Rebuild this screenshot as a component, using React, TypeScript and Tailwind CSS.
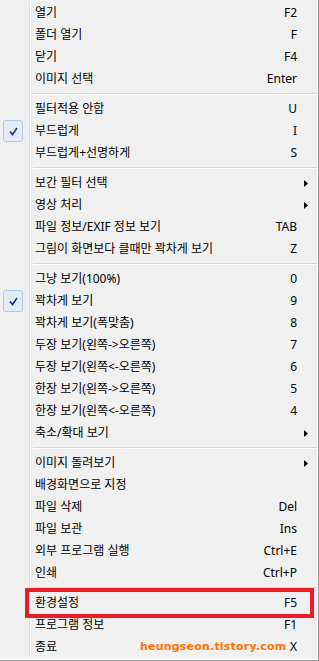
type Item = { label: string; key?: string; sub?: boolean; checked?: boolean } | 'sep'

const items: Item[] = [
  {label: '열기', key: 'F2'},
  {label: '폴더 열기', key: 'F'},
  {label: '닫기', key: 'F4'},
  {label: '이미지 선택', key: 'Enter'},
  'sep',
  {label: '필터적용 안함', key: 'U'},
  {label: '부드럽게', key: 'I', checked: true},
  {label: '부드럽게+선명하게', key: 'S'},
  'sep',
  {label: '보간 필터 선택', sub: true},
  {label: '영상 처리', sub: true},
  {label: '파일 정보/EXIF 정보 보기', key: 'TAB'},
  {label: '그림이 화면보다 클때만 꽉차게 보기', key: 'Z'},
  'sep',
  {label: '그냥 보기(100%)', key: '0'},
  {label: '꽉차게 보기', key: '9', checked: true},
  {label: '꽉차게 보기(폭맞춤)', key: '8'},
  {label: '두장 보기(왼쪽->오른쪽)', key: '7'},
  {label: '두장 보기(왼쪽<-오른쪽)', key: '6'},
  {label: '한장 보기(왼쪽->오른쪽)', key: '5'},
  {label: '한장 보기(왼쪽<-오른쪽)', key: '4'},
  {label: '축소/확대 보기', sub: true},
  'sep',
  {label: '이미지 돌려보기', sub: true},
  {label: '배경화면으로 지정'},
  {label: '파일 삭제', key: 'Del'},
  {label: '파일 보관', key: 'Ins'},
  {label: '외부 프로그램 실행', key: 'Ctrl+E'},
  {label: '인쇄', key: 'Ctrl+P'},
  'sep',
  {label: '환경설정', key: 'F5'},
  {label: '프로그램 정보', key: 'F1'},
  {label: '종료', key: 'X'},
]

function Gutter({checked}: { checked?: boolean }) {
  return <div className="flex h-full shrink-0">
    <div className="w-[29px] flex items-center pl-[3px]">
      {checked && (
        <div className="w-[20px] h-[22px] rounded-[3px] border border-[#aecbee] bg-[#e3ecf8] flex items-center justify-center">
          <svg width="9" height="9" viewBox="0 0 9 9">
            <path d="M1 4.5 L3.5 7.5 L8 1" fill="none" stroke="#1b3a8c" strokeWidth="1.7"/>
          </svg>
        </div>
      )}
    </div>
    <div className="w-px bg-[#e2e3e3]"/>
    <div className="w-px bg-white"/>
  </div>
}

export default function App() {
  return <div className="relative w-[319px] h-[661px] overflow-hidden bg-[#f0f0f0] border-r border-b border-[#979797]" style={{fontFamily: '"Noto Sans", "Noto Sans CJK KR", sans-serif'}}>
    <div className="h-full border-r border-b border-white pt-[2px]">
      {items.map((item, i) => item === 'sep' ? (
        <div key={i} className="flex h-[8px]">
          <Gutter/>
          <div className="flex-1 flex flex-col justify-center pl-[2px]">
            <div className="h-px bg-[#d7d7d7]"/>
            <div className="h-px bg-white"/>
          </div>
        </div>
      ) : (
        <div key={i} className="flex h-[22px] items-center text-[12px] leading-none text-black">
          <Gutter checked={item.checked}/>
          <div className="flex-1 pl-[4px] whitespace-nowrap">{item.label}</div>
          <div className="whitespace-nowrap">{item.key}</div>
          <div className="w-[20px] flex items-center pl-[7px]">
            {item.sub && (
              <svg width="4" height="7" viewBox="0 0 4 7">
                <path d="M0 0 L4 3.5 L0 7 Z" fill="#000"/>
              </svg>
            )}
          </div>
        </div>
      ))}
    </div>

    <div className="absolute left-[25px] top-[588px] w-[289px] h-[30px] border-4 border-[#ee1c25]"/>

    <div className="absolute left-[140px] top-[640px] text-[11px] font-bold leading-[14px] text-[#ff7200] tracking-[0.2px]" style={{fontFamily: '"DejaVu Sans", sans-serif'}}>
      heungseon.tistory.com
    </div>
  </div>
}
